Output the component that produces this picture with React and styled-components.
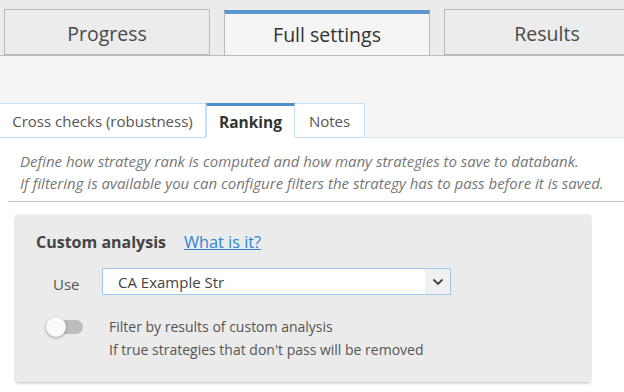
import React from "react"
import styled, { createGlobalStyle } from "styled-components"

const GlobalStyle = createGlobalStyle`
  body {
    margin: 0;
    background: #ffffff;
    font-family: "Open Sans", "Liberation Sans", sans-serif;
    color: #555;
  }
`

function App() {
  return (
    <Page>
      <GlobalStyle />
      <TabBar>
        <MainTab>Progress</MainTab>
        <MainTab $active>Full settings</MainTab>
        <MainTab>Results</MainTab>
      </TabBar>
      <Spacer />
      <SubTabBar>
        <SubTab $width={206}>Cross checks (robustness)</SubTab>
        <SubTab $width={89} $active>Ranking</SubTab>
        <SubTab $width={70}>Notes</SubTab>
      </SubTabBar>
      <Content>
        <Description>
          Define how strategy rank is computed and how many strategies to save to databank.
          <br />
          If filtering is available you can configure filters the strategy has to pass before it is saved.
        </Description>
        <Divider />
        <Panel>
          <PanelTitle>
            <strong>Custom analysis</strong>
            <HelpLink href="#">What is it?</HelpLink>
          </PanelTitle>
          <UseRow>
            <Label>Use</Label>
            <Select>
              <SelectValue>CA Example Str</SelectValue>
              <SelectArrow>
                <svg width="12" height="8" viewBox="0 0 12 8">
                  <path d="M1.5 1.5 L6 6 L10.5 1.5" fill="none" stroke="#444" strokeWidth="1.8" />
                </svg>
              </SelectArrow>
            </Select>
          </UseRow>
          <ToggleRow>
            <Toggle>
              <Knob />
            </Toggle>
            <ToggleText>
              Filter by results of custom analysis
              <br />
              If true strategies that don't pass will be removed
            </ToggleText>
          </ToggleRow>
        </Panel>
      </Content>
    </Page>
  )
}

const Page = styled.div`
  width: 624px;
  height: 392px;
  overflow: hidden;
`

const TabBar = styled.div`
  display: flex;
  align-items: flex-end;
  gap: 14px;
  height: 55px;
  padding-left: 4px;
  background: #ebebeb;
  border-bottom: 1px solid #bbb;
  overflow: hidden;
`

const MainTab = styled.div`
  flex: 0 0 204px;
  margin-bottom: ${(p) => (p.$active ? "-1px" : "0")};
  display: flex;
  align-items: center;
  justify-content: center;
  box-sizing: content-box;
  border: 1px solid #bbb;
  border-bottom: ${(p) => (p.$active ? "none" : "1px solid #bbb")};
  border-top: ${(p) => (p.$active ? "4px solid #5b95cf" : "1px solid #bbb")};
  background: ${(p) => (p.$active ? "#f5f5f5" : "#ececec")};
  color: ${(p) => (p.$active ? "#333" : "#4a4a4a")};
  font-size: 19.5px;
  font-weight: 500;
  padding-top: ${(p) => (p.$active ? "0" : "3px")};
  padding-bottom: ${(p) => (p.$active ? "2px" : "0")};
  height: ${(p) => (p.$active ? "40px" : "41px")};
`

const Spacer = styled.div`
  height: 47px;
  background: #f5f5f5;
`

const SubTabBar = styled.div`
  display: flex;
  height: 34px;
  background: #f5f5f5;
  border-bottom: 1px solid #d7e7f5;
`

const SubTab = styled.div`
  width: ${(p) => p.$width}px;
  box-sizing: border-box;
  display: flex;
  align-items: center;
  justify-content: center;
  background: #fff;
  border: 1px solid #c6def3;
  border-left: ${(p) => (p.$active ? "1px solid #c6def3" : "none")};
  border-top: ${(p) => (p.$active ? "3px solid #4f8fcc" : "1px solid #c6def3")};
  border-bottom: ${(p) => (p.$active ? "1px solid #fff" : "1px solid #c6def3")};
  margin-bottom: -1px;
  height: 35px;
  font-size: ${(p) => (p.$active ? "15.5px" : "15px")};
  font-weight: ${(p) => (p.$active ? 700 : 400)};
  color: ${(p) => (p.$active ? "#333" : "#555")};
`

const Content = styled.div`
  background: #fff;
  padding-top: 12px;
`

const Description = styled.div`
  padding-left: 20px;
  font-size: 15px;
  font-style: italic;
  line-height: 22px;
  color: #777;
  white-space: nowrap;
`

const Divider = styled.div`
  margin: 7px 0 0 8px;
  border-top: 1px solid #c4c4c4;
`

const Panel = styled.div`
  margin: 13px 0 0 16px;
  width: 574px;
  height: 167px;
  box-sizing: border-box;
  background: #ebebeb;
  box-shadow: 0 1px 3px rgba(0, 0, 0, 0.28);
  padding: 16px 20px;
`

const PanelTitle = styled.div`
  display: flex;
  align-items: center;
  gap: 18px;
  font-size: 16px;
  color: #444;
  strong {
    font-weight: 700;
  }
`

const HelpLink = styled.a`
  color: #2f86d6;
  font-size: 16.3px;
  text-decoration: underline;
`

const UseRow = styled.div`
  display: flex;
  align-items: center;
  margin-top: 15px;
  padding-left: 17px;
`

const Label = styled.div`
  width: 49px;
  font-size: 15px;
  color: #555;
  padding-top: 4px;
`

const Select = styled.div`
  display: flex;
  width: 349px;
  height: 27px;
  box-sizing: border-box;
  border: 1px solid #9fc9ef;
  background: #fff;
`

const SelectValue = styled.div`
  flex: 1;
  display: flex;
  align-items: center;
  padding-left: 15px;
  font-size: 15px;
  color: #444;
`

const SelectArrow = styled.div`
  width: 25px;
  display: flex;
  align-items: center;
  justify-content: center;
  background: #f0f0f0;
`

const ToggleRow = styled.div`
  display: flex;
  align-items: flex-start;
  margin-top: 28px;
  padding-left: 11px;
`

const Toggle = styled.div`
  position: relative;
  width: 36px;
  height: 14px;
  margin-top: -3px;
  border-radius: 7px;
  background: #bdbdbd;
`

const Knob = styled.div`
  position: absolute;
  left: -1px;
  top: -3px;
  width: 20px;
  height: 20px;
  border-radius: 50%;
  background: #fafafa;
  box-shadow: 0 1px 3px rgba(0, 0, 0, 0.35);
`

const ToggleText = styled.div`
  margin-left: 26px;
  font-size: 14px;
  line-height: 23px;
  color: #555;
  margin-top: -8px;
`

export default App
